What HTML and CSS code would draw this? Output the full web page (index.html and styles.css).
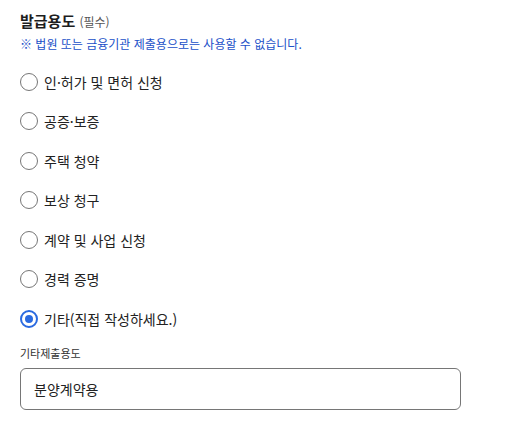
FILE: index.html
```html
<!DOCTYPE html>
<html lang="ko">
<head>
<meta charset="utf-8">
<link rel="stylesheet" href="styles.css">
</head>
<body>
<div class="form">
  <div class="title"><strong>발급용도</strong> <span class="req">(필수)</span></div>
  <div class="notice">※ 법원 또는 금융기관 제출용으로는 사용할 수 없습니다.</div>
  <ul class="options">
    <li class="opt"><span class="radio"></span><span>인·허가 및 면허 신청</span></li>
    <li class="opt"><span class="radio"></span><span>공증·보증</span></li>
    <li class="opt"><span class="radio"></span><span>주택 청약</span></li>
    <li class="opt"><span class="radio"></span><span>보상 청구</span></li>
    <li class="opt"><span class="radio"></span><span>계약 및 사업 신청</span></li>
    <li class="opt"><span class="radio"></span><span>경력 증명</span></li>
    <li class="opt"><span class="radio checked"></span><span>기타(직접 작성하세요.)</span></li>
  </ul>
  <div class="label">기타제출용도</div>
  <div class="input">분양계약용</div>
</div>
</body>
</html>
```

FILE: styles.css
```css
* { box-sizing: border-box; }
html, body { margin: 0; padding: 0; background: #fff; }
body {
  font-family: "Noto Sans CJK KR", "Noto Sans", sans-serif;
  color: #222;
}
.form {
  padding: 11px 0 0 20px;
  width: 461px;
}
.title {
  font-size: 15px;
  line-height: 20px;
  color: #1e1e1e;
}
.title strong { font-weight: 700; }
.req {
  font-size: 12px;
  color: #555;
}
.notice {
  margin-top: 3px;
  font-size: 12px;
  line-height: 18px;
  color: #2150c8;
}
.options {
  list-style: none;
  margin: 9px 0 0;
  padding: 0;
}
.opt {
  height: 39.5px;
  display: flex;
  align-items: center;
  gap: 6px;
  font-size: 14px;
  color: #222;
}
.radio {
  width: 18px;
  height: 18px;
  border: 1.5px solid #767676;
  border-radius: 50%;
  flex: none;
  display: flex;
  align-items: center;
  justify-content: center;
}
.radio.checked {
  border: 2px solid #2a6ae0;
}
.radio.checked::after {
  content: "";
  width: 8px;
  height: 8px;
  border-radius: 50%;
  background: #2a6ae0;
}
.label {
  margin-top: 6px;
  font-size: 11px;
  line-height: 16px;
  color: #333;
}
.input {
  margin-top: 7px;
  height: 42px;
  border: 1px solid #767676;
  border-radius: 6px;
  padding: 0 13px;
  display: flex;
  align-items: center;
  font-size: 14px;
  color: #222;
}
```
